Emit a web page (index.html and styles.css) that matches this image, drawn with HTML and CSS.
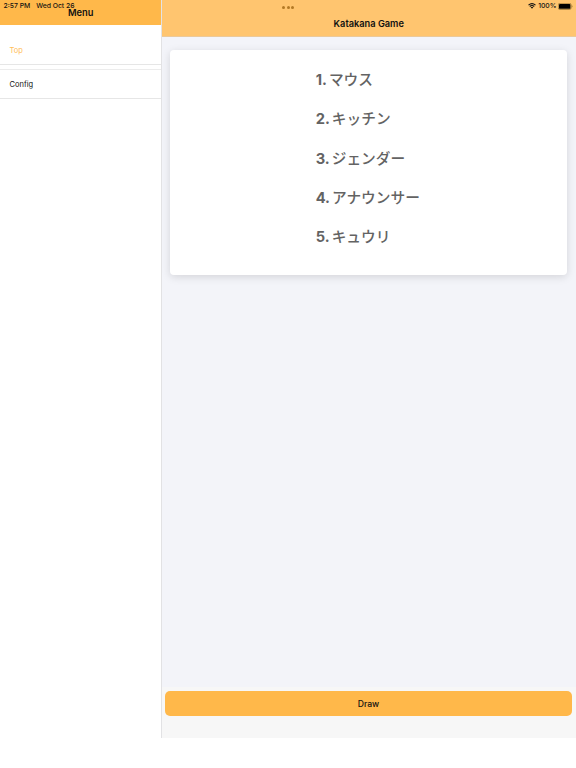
FILE: index.html
```html
<!DOCTYPE html>
<html lang="en">
<head>
<meta charset="utf-8">
<title>Katakana Game</title>
<link rel="stylesheet" href="styles.css">
</head>
<body>
<div class="status">
  <span class="time">2:57 PM</span><span class="date">Wed Oct 26</span>
  <span class="dots"><i></i><i></i><i></i></span>
  <svg class="wifi" viewBox="0 0 16 12"><path d="M1 4.3Q8-2 15 4.3M3.5 7Q8 3 12.5 7" fill="none" stroke="#111" stroke-width="2.2"/><path d="M5.4 8.7Q8 6.5 10.6 8.7L8 11.6Z" fill="#111"/></svg>
  <span class="percent">100%</span>
  <svg class="battery" viewBox="0 0 15 7"><rect x=".3" y=".3" width="12.8" height="6.2" rx="1.6" fill="none" stroke="#806023" stroke-width=".6"/><rect x="1" y="1" width="11.4" height="4.8" rx=".9"/><path d="M13.8 2.3Q15.1 3.4 13.8 4.5Z" fill="#806023"/></svg>
</div>
<div class="app">
  <aside class="menu">
    <header class="menu-head">Menu</header>
    <nav>
      <a class="item top">Top</a>
      <a class="item config">Config</a>
    </nav>
  </aside>
  <main class="main">
    <header class="head">Katakana Game</header>
    <section class="content">
      <div class="card">
        <ul class="words">
          <li><span class="num">1.</span>マウス</li>
          <li><span class="num">2.</span>キッチン</li>
          <li><span class="num">3.</span>ジェンダー</li>
          <li><span class="num">4.</span>アナウンサー</li>
          <li><span class="num">5.</span>キュウリ</li>
        </ul>
      </div>
    </section>
    <footer class="foot"><button class="draw">Draw</button></footer>
  </main>
</div>
</body>
</html>
```
FILE: styles.css
```css
* { box-sizing: border-box; }
body {
  margin: 0;
  background: #fff;
  color: #111;
  font-family: Inter, "Noto Sans CJK JP", sans-serif;
}
.status {
  position: absolute;
  inset: 0 0 auto 0;
  z-index: 2;
  height: 12px;
  padding: 0 3px 0 3.5px;
  display: flex;
  align-items: center;
  font-size: 6.8px;
  line-height: 12px;
  font-weight: 500;
}
.date { margin-left: 6px; }
.dots {
  position: absolute;
  left: 282px;
  top: 6px;
  display: flex;
  gap: 1.5px;
}
.dots i { width: 3px; height: 3px; border-radius: 50%; background: #b27925; }
.wifi { width: 8px; height: 6px; margin-left: auto; }
.percent { margin: 0 1.5px 0 2px; }
.battery { width: 15px; height: 7px; }
.app { display: flex; height: 738px; }
.menu { width: 161.5px; border-right: 1px solid #e2e2e4; }
.menu-head {
  height: 25px;
  padding: 6px 0 0 1px;
  background: #ffb84a;
  text-align: center;
  font-size: 9.3px;
  line-height: 13px;
  font-weight: 600;
}
.item {
  display: block;
  height: 29px;
  padding-left: 9.5px;
  border-bottom: 1px solid #e6e6e6;
  font-size: 7.5px;
  line-height: 28px;
}
.top { height: 40px; padding-top: 12px; color: #ffbd58; }
.config { height: 30px; margin-top: 4px; padding-top: 1px; border-top: 1px solid #ececec; }
.main { flex: 1; display: flex; flex-direction: column; background: #f3f4f9; }
.head {
  height: 37px;
  padding-top: 17px;
  border-bottom: 1px solid #ebc99a;
  background: #ffc56f;
  text-align: center;
  font-size: 9.25px;
  line-height: 14px;
  font-weight: 600;
}
.content { flex: 1; padding: 13px 9px 0 8.5px; }
.card {
  height: 225px;
  padding-right: 1.5px;
  display: flex;
  justify-content: center;
  border-radius: 4px;
  background: #fff;
  box-shadow: 0 2px 9px rgba(0, 0, 0, .13);
}
.words {
  margin: 0;
  padding: 11px 0 0;
  list-style: none;
  color: #636363;
  font-size: 14.7px;
  font-weight: 500;
}
.words li { height: 39.3px; line-height: 39.3px; white-space: nowrap; }
.num { margin-right: 2px; font-weight: 700; }
.foot { height: 51px; padding: 4px 4px 0 3.5px; background: #f7f7f7; }
.draw {
  display: block;
  width: 100%;
  height: 25px;
  padding: 1px 0 0;
  border: 0;
  border-radius: 5px;
  background: #ffb84a;
  color: #111;
  font: 500 8.6px/24px Inter, sans-serif;
}
```
